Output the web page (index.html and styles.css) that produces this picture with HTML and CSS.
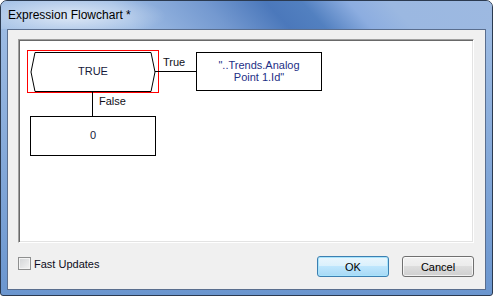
FILE: index.html
```
<!DOCTYPE html>
<html lang="en">
<head>
    <meta charset="UTF-8">
    <title>Expression Flowchart</title>
    <link rel="stylesheet" href="styles.css">
</head>
<body>
    <div class="window">
        <div class="titlebar">Expression Flowchart *</div>
        <div class="frame">
            <div class="client">
                <div class="canvas">
                    <svg class="chart" width="452" height="200" viewBox="20 41 452 200">
                        <rect x="27.5" y="50.5" width="131" height="42" class="selected"/>
                        <polygon points="35,52.5 151,52.5 155,72 151,91.5 35,91.5 31,72" class="node"/>
                        <text x="93" y="75" class="value">TRUE</text>

                        <line x1="155" y1="71.5" x2="196" y2="71.5" class="link"/>
                        <text x="163" y="66" class="label">True</text>
                        <rect x="196.5" y="52.5" width="125" height="38" class="node"/>
                        <text x="259" y="69" class="value string">"..Trends.Analog</text>
                        <text x="259" y="81" class="value string">Point 1.Id"</text>

                        <line x1="92.5" y1="91.5" x2="92.5" y2="116.5" class="link"/>
                        <text x="99" y="105" class="label">False</text>
                        <rect x="30.5" y="116.5" width="125" height="39" class="node"/>
                        <text x="93" y="139" class="value">0</text>
                    </svg>
                </div>
                <div class="footer">
                    <label class="check">
                        <span class="box"></span>
                        <span>Fast Updates</span>
                    </label>
                    <div class="buttons">
                        <button class="btn default">OK</button>
                        <button class="btn">Cancel</button>
                    </div>
                </div>
            </div>
        </div>
    </div>
</body>
</html>
```
FILE: styles.css
```
body{
    margin: 0;
    background: #ffffff;
    font-family: "Liberation Sans", Arial, sans-serif;
}
.window{
    width: 493px;
    height: 296px;
    box-sizing: border-box;
    border: 1px solid #2b3a50;
    border-radius: 7px 7px 3px 3px;
    overflow: hidden;
    background: linear-gradient(to bottom, #a2bfe5, #6b96cf);
    display: flex;
    flex-direction: column;
}
.titlebar{
    height: 28px;
    flex: none;
    padding-left: 7px;
    line-height: 29px;
    font-size: 12px;
    color: #000000;
    background:
        radial-gradient(ellipse 95px 22px at 70px 15px, rgba(255,255,255,0.65), rgba(255,255,255,0)),
        linear-gradient(48deg, #a4c1e6 0%, #9ebce4 26%, #7499d0 44%, #4b78bb 56%, #5280c0 63%, #8cade0 72%, #9bb8e1 80%, #9db9e1 100%);
}
.frame{
    flex: 1;
    padding: 0 6px 5px 6px;
    display: flex;
}
.client{
    flex: 1;
    border: 1px solid #5a6e8e;
    background: #f0f0f0;
    padding: 9px 11px 0 10px;
    display: flex;
    flex-direction: column;
}
.canvas{
    width: 456px;
    height: 204px;
    box-sizing: border-box;
    border: 1px solid;
    border-color: #a0a0a0 #ffffff #ffffff #a0a0a0;
    padding: 1px;
    box-shadow: inset 1px 1px 0 #696969, inset -1px -1px 0 #e3e3e3;
    background: #ffffff;
}
.chart{
    display: block;
    background: #ffffff;
}
.chart .selected{
    fill: none;
    stroke: #ff0000;
    stroke-width: 1;
}
.chart .node{
    fill: #ffffff;
    stroke: #000000;
    stroke-width: 1;
}
.chart .link{
    stroke: #000000;
    stroke-width: 1;
}
.chart text{
    font-family: "Liberation Sans", Arial, sans-serif;
    font-size: 11px;
}
.chart .value{
    text-anchor: middle;
    fill: #15183a;
}
.chart .string{
    fill: #1d2f86;
}
.chart .label{
    fill: #101018;
}
.footer{
    display: flex;
    align-items: flex-start;
    margin-top: 13px;
    font-size: 11px;
    color: #000000;
}
.check{
    display: flex;
    align-items: center;
    gap: 3px;
    margin-top: 1px;
    height: 13px;
    color: #0c0c20;
}
.box{
    width: 13px;
    height: 13px;
    box-sizing: border-box;
    border: 1px solid #8e8f8f;
    background: linear-gradient(135deg, #d2d4d6, #f4f4f4);
    box-shadow: inset 0 0 0 1px #f4f4f4;
}
.buttons{
    margin-left: auto;
    display: flex;
    gap: 13px;
}
.btn{
    width: 72px;
    height: 21px;
    box-sizing: border-box;
    border: 1px solid #707070;
    border-radius: 3px;
    padding: 0;
    font-family: "Liberation Sans", Arial, sans-serif;
    font-size: 11px;
    color: #000000;
    background: linear-gradient(to bottom, #f2f2f2 0%, #ebebeb 50%, #dddddd 50%, #cfcfcf 100%);
    box-shadow: inset 0 0 0 1px rgba(255,255,255,0.7);
}
.btn.default{
    border-color: #3c7fb1;
    background: linear-gradient(to bottom, #eaf6fd 0%, #d9f0fc 50%, #bee6fd 50%, #a7d9f5 100%);
    box-shadow: inset 0 0 0 1px #a8e4fc;
}
```
